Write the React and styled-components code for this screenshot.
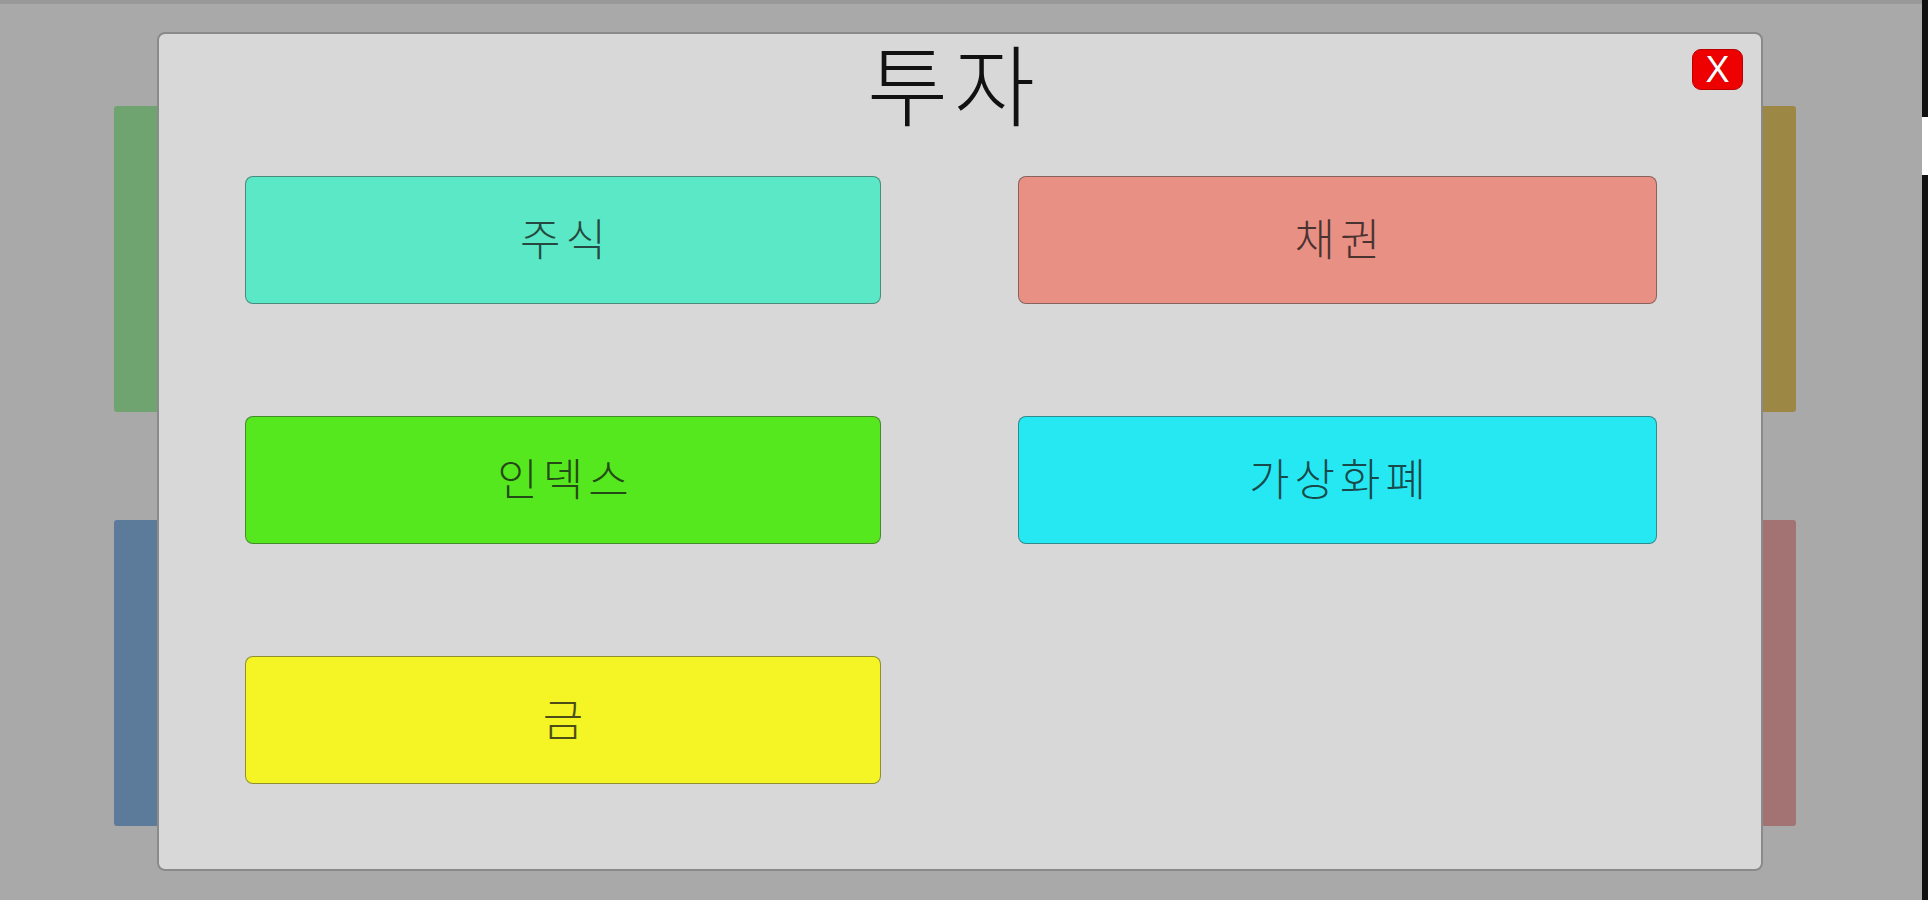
import styled, { createGlobalStyle } from "styled-components";

const GlobalStyle = createGlobalStyle`
    html, body {
        margin: 0;
        padding: 0;
        background: #a9a9a9;
        overflow: hidden;
    }
    body {
        font-family: "Noto Sans CJK KR", "Noto Sans", sans-serif;
    }
`

const Screen = styled.div`
    display: flex;
    width: 1928px;
    height: 900px;
`

const Stage = styled.main`
    position: relative;
    flex: 1;
    border-top: 4px solid #999;
    box-sizing: border-box;
    padding: 102px 126px 0 114px;
`

const Rail = styled.div`
    width: 6px;
    background: #111;
    display: flex;
    flex-direction: column;
    padding-top: 117px;
    box-sizing: border-box;
`

const RailThumb = styled.div`
    height: 58px;
    background: #fff;
`

const CardGrid = styled.div`
    display: grid;
    grid-template-columns: 1fr 1fr;
    grid-auto-rows: 306px;
    column-gap: 40px;
    row-gap: 108px;
`

const Card = styled.div`
    background: ${({ tone }) => tone};
    border-radius: 3px;
`

const Modal = styled.section`
    position: absolute;
    left: 157px;
    top: 28px;
    width: 1606px;
    height: 839px;
    box-sizing: border-box;
    background: #d8d8d8;
    border: 2px solid #8a8a8a;
    border-radius: 8px;
    padding: 0 104px 0 86px;
    display: flex;
    flex-direction: column;
`

const Title = styled.h2`
    margin: 3px 0 0;
    text-align: center;
    font-size: 88px;
    line-height: 1;
    font-weight: 300;
    color: #111;
    letter-spacing: 6px;
    text-indent: 6px;
`

const CloseButton = styled.button`
    position: absolute;
    top: 15px;
    right: 18px;
    width: 51px;
    height: 41px;
    padding: 0;
    border: 1px solid #b00;
    border-radius: 9px;
    background: #ee0000;
    color: #fff;
    font-family: "Liberation Sans", Arial, sans-serif;
    font-size: 36px;
    line-height: 1;
    cursor: pointer;
    display: flex;
    align-items: center;
    justify-content: center;
    text-shadow: 0 0 1px rgba(0,0,0,.4);
`

const OptionGrid = styled.div`
    display: grid;
    grid-template-columns: 636px 639px;
    grid-auto-rows: 128px;
    column-gap: 137px;
    row-gap: 112px;
    margin-top: 51px;
`

const Option = styled.button`
    background: ${({ tone }) => tone};
    border: 1px solid rgba(60, 60, 60, .55);
    border-radius: 8px;
    font-family: "Noto Sans CJK KR", "Noto Sans", sans-serif;
    font-size: 44px;
    font-weight: 300;
    letter-spacing: 5px;
    text-indent: 5px;
    color: rgba(20, 20, 20, .75);
    cursor: pointer;
    padding: 0 0 6px;
    display: flex;
    align-items: center;
    justify-content: center;
`

const cards = ['#6fa36f', '#9c8745', '#5c7b9b', '#a37272'];

const options = [
    { label: '주식', tone: '#5ae8c6' },
    { label: '채권', tone: '#e89084' },
    { label: '인덱스', tone: '#55e81e' },
    { label: '가상화폐', tone: '#26e8f2' },
    { label: '금', tone: '#f5f526' },
];

const App = () => {
    return <Screen>
        <GlobalStyle />
        <Stage>
            <CardGrid>
                {cards.map(tone => <Card key={tone} tone={tone} />)}
            </CardGrid>

            <Modal>
                <Title>투자</Title>
                <CloseButton aria-label="close">X</CloseButton>
                <OptionGrid>
                    {options.map(item => <Option key={item.label} tone={item.tone}>{item.label}</Option>)}
                </OptionGrid>
            </Modal>
        </Stage>
        <Rail>
            <RailThumb />
        </Rail>
    </Screen>
}

export default App;
